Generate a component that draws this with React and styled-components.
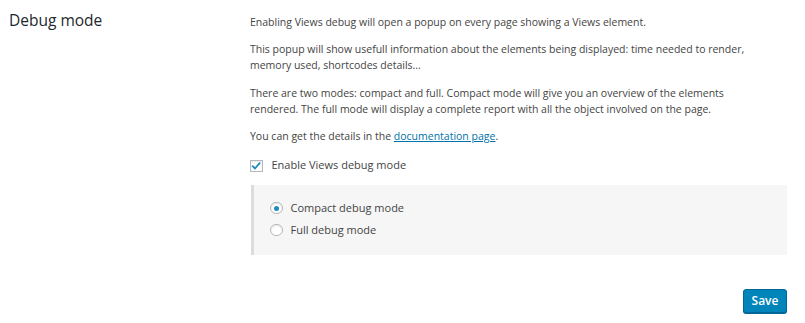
import React from "react";
import styled, { createGlobalStyle } from "styled-components";

const Global = createGlobalStyle`
  html, body { margin: 0; padding: 0; background: #fff; }
  body { font-family: "Open Sans", "Liberation Sans", sans-serif; color: #444; }
`;

const Page = styled.div`
  width: 805px;
  height: 323px;
  box-sizing: border-box;
  padding: 0 18px 0 0;
  display: grid;
  grid-template-columns: 250px 1fr;
  grid-template-rows: auto auto;
`;

const Heading = styled.h2`
  margin: 0;
  padding: 10px 0 0 9px;
  font-size: 15.5px;
  line-height: 20px;
  font-weight: 400;
  color: #23282d;
`;

const Content = styled.div`
  padding-top: 13.5px;
  font-size: 10.5px;
  line-height: 16px;
`;

const Para = styled.p`
  margin: 0 0 11.5px 0;
  max-width: 505px;
`;

const Link = styled.a`
  color: #0073aa;
  text-decoration: underline;
`;

const CheckRow = styled.label`
  display: flex;
  align-items: center;
  gap: 9px;
  margin-top: 13.3px;
  height: 16px;
  font-size: 11px;
`;

const Box = styled.span`
  width: 12.5px;
  height: 12.5px;
  margin-top: 1.5px;
  box-sizing: border-box;
  border: 1px solid #b4b9be;
  background: #fff;
  box-shadow: inset 0 1px 2px rgba(0,0,0,0.1);
  display: flex;
  align-items: center;
  justify-content: center;
`;

const Panel = styled.div`
  margin-top: 11.7px;
  background: #f6f6f6;
  border-left: 3px solid #dcdcdc;
  margin-left: 1px;
  padding: 12.2px 16px 14.2px 16px;
`;

const RadioRow = styled.label`
  display: flex;
  align-items: center;
  gap: 8px;
  height: 22px;
  font-size: 11px;
`;

const Radio = styled.span`
  width: 12.5px;
  height: 12.5px;
  box-sizing: border-box;
  border-radius: 50%;
  border: 1px solid #b4b9be;
  background: #fff;
  box-shadow: inset 0 1px 2px rgba(0,0,0,0.1);
  display: flex;
  align-items: center;
  justify-content: center;
  &::after {
    content: "";
    width: 5px;
    height: 5px;
    border-radius: 50%;
    background: #1e8cbe;
    display: ${(p) => (p.$checked ? "block" : "none")};
  }
`;

const Footer = styled.div`
  grid-column: 2;
  display: flex;
  justify-content: flex-end;
  padding-top: 23px;
`;

const Button = styled.button`
  height: 24px;
  width: 44px;
  padding: 0;
  box-sizing: border-box;
  border: 1px solid #006799;
  border-radius: 3px;
  background: #0085ba;
  color: #fff;
  font-family: "Open Sans", "Liberation Sans", sans-serif;
  font-size: 12px;
  font-weight: 600;
  line-height: 22px;
  box-shadow: 0 1px 0 #006799;
`;

export default function App() {
  return (
    <>
      <Global />
      <Page>
        <Heading>Debug mode</Heading>
        <Content>
          <Para>Enabling Views debug will open a popup on every page showing a Views element.</Para>
          <Para>This popup will show usefull information about the elements being displayed: time needed to render, memory used, shortcodes details...</Para>
          <Para>There are two modes: compact and full. Compact mode will give you an overview of the elements rendered. The full mode will display a complete report with all the object involved on the page.</Para>
          <Para>You can get the details in the <Link href="#">documentation page</Link>.</Para>
          <CheckRow>
            <Box>
              <svg width="10" height="10" viewBox="0 0 12 12">
                <path d="M2 6.2 L4.8 9 L10.3 2.6" fill="none" stroke="#1e8cbe" strokeWidth="2.2" strokeLinecap="round" strokeLinejoin="round" />
              </svg>
            </Box>
            Enable Views debug mode
          </CheckRow>
          <Panel>
            <RadioRow><Radio $checked />Compact debug mode</RadioRow>
            <RadioRow><Radio />Full debug mode</RadioRow>
          </Panel>
        </Content>
        <Footer>
          <Button>Save</Button>
        </Footer>
      </Page>
    </>
  );
}
